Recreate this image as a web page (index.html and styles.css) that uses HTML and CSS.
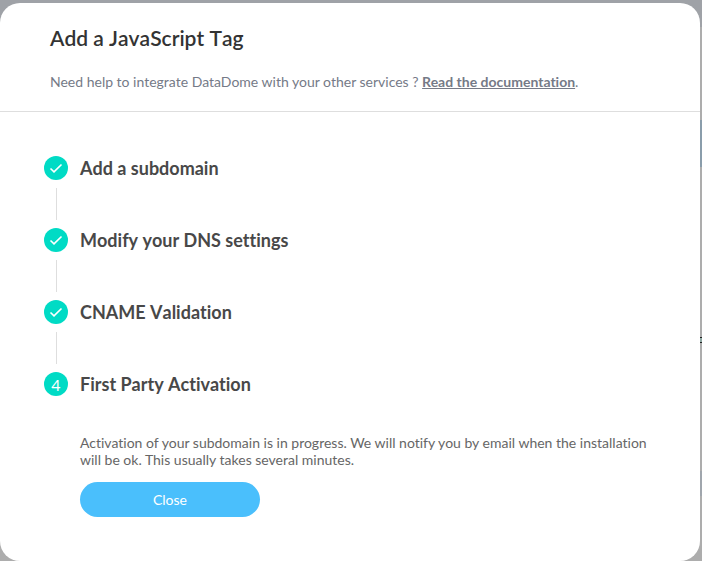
FILE: index.html
```html
<!DOCTYPE html>
<html lang="en">
<head>
    <meta charset="UTF-8">
    <meta name="viewport" content="width=device-width, initial-scale=1.0">
    <title>Add a JavaScript Tag</title>
    <link rel="stylesheet" href="styles.css">
</head>
<body>
    <div class="modal" role="dialog" aria-labelledby="modalTitle">
        <header class="modal-header">
            <h1 id="modalTitle">Add a JavaScript Tag</h1>
            <p>Need help to integrate DataDome with your other services ? <a href="#">Read the documentation</a>.</p>
        </header>
        <div class="modal-body">
            <ol class="steps">
                <li class="step">
                    <span class="step-icon"><svg viewBox="0 0 24 24"><path d="M6.5 12.5l3.5 3.3 7.5-7.3"/></svg></span>
                    <h2>Add a subdomain</h2>
                </li>
                <li class="step">
                    <span class="step-icon"><svg viewBox="0 0 24 24"><path d="M6.5 12.5l3.5 3.3 7.5-7.3"/></svg></span>
                    <h2>Modify your DNS settings</h2>
                </li>
                <li class="step">
                    <span class="step-icon"><svg viewBox="0 0 24 24"><path d="M6.5 12.5l3.5 3.3 7.5-7.3"/></svg></span>
                    <h2>CNAME Validation</h2>
                </li>
                <li class="step">
                    <span class="step-icon">4</span>
                    <h2>First Party Activation</h2>
                </li>
            </ol>
            <div class="step-content">
                <p>Activation of your subdomain is in progress. We will notify you by email when the installation will be ok. This usually takes several minutes.</p>
                <button type="button" class="btn">Close</button>
            </div>
        </div>
    </div>
</body>
</html>
```
FILE: styles.css
```css
* {
    box-sizing: border-box;
}

/* dimmed page behind the modal */
body {
    margin: 0;
    padding: 3px 2px 0 0;
    min-height: 100vh;
    display: flex;
    font-family: Lato, "Liberation Sans", sans-serif;
    font-variant-ligatures: none;
    background: linear-gradient(
        #9fa2a7 27px, #adadad 27px, #adadad 120px,
        #8a9dab 120px, #8a9dab 167px, #adadad 167px, #adadad 337px,
        #222 337px, #222 338px, #8fa9a4 338px, #8fa9a4 342px, #222 342px, #222 343px,
        #adadad 343px, #adadad 471px, #a0a6ad 471px, #a0a6ad 496px, #adadad 496px
    );
}

.modal {
    flex: 1;
    background-color: #fff;
    border-radius: 20px;
}

.modal-header {
    padding: 22px 50px 20px;
    border-bottom: 1px solid #dedede;
}

h1, h2 {
    font-kerning: none;
}

h1 {
    margin: 0 0 22px;
    font-size: 21px;
    line-height: 26px;
    font-weight: 600;
    color: #333;
}

.modal-header p {
    margin: 0;
    font-size: 14px;
    line-height: 18px;
    color: #757a87;
}

.modal-header a {
    font-weight: 700;
    color: inherit;
}

.modal-body {
    padding: 44px;
}

.steps {
    margin: 0;
    padding: 0;
    list-style: none;
}

.step {
    display: grid;
    grid-template-columns: 24px 1fr;
    column-gap: 12px;
    align-items: center;
}

/* line between two steps */
.step:not(:last-child)::after {
    content: "";
    width: 1px;
    height: 32px;
    margin: 8px 12px;
    background-color: #dedede;
}

.step-icon {
    display: flex;
    justify-content: center;
    align-items: center;
    width: 24px;
    height: 24px;
    border-radius: 50%;
    background-color: #00dbc5;
    color: #fff;
    font-size: 16px;
}

.step-icon svg {
    width: 24px;
    height: 24px;
    fill: none;
    stroke: #fff;
    stroke-width: 1.6;
}

h2 {
    margin: 0;
    font-size: 18px;
    line-height: 24px;
    font-weight: 700;
    color: #484848;
}

.step-content {
    padding: 38px 0 0 36px;
}

.step-content p {
    margin: 0 0 14px;
    font-size: 14px;
    line-height: 17px;
    color: #666;
}

.btn {
    width: 180px;
    height: 35px;
    border: none;
    border-radius: 18px;
    background-color: #4abffc;
    color: #fff;
    font-family: inherit;
    font-size: 14px;
    cursor: pointer;
}
```
